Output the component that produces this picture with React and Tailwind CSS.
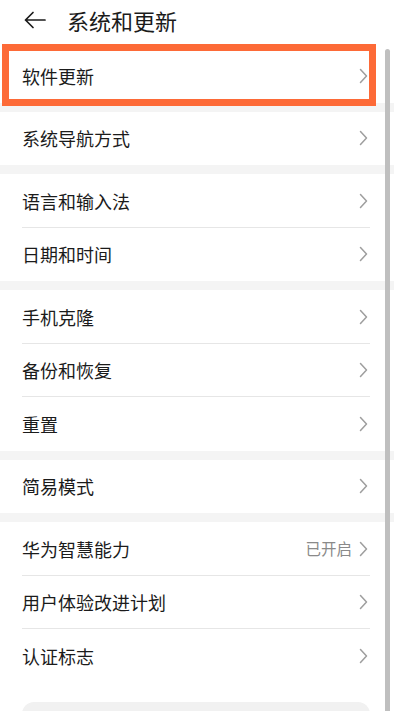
import React from "react";

function Chevron() {
  return (
    <svg width="9" height="16" viewBox="0 0 9 16" className="shrink-0">
      <path d="M1.5 1.5 L7.5 8 L1.5 14.5" fill="none" stroke="#9e9e9e" strokeWidth="1.5" strokeLinecap="round" strokeLinejoin="round" />
    </svg>
  );
}

function Row({ label, value, divider }) {
  return (
    <div className="relative h-[53.5px] bg-white flex items-center pl-[22px] pr-[26px]">
      <span className="flex-1 text-[18px] text-[#1b1b1b] leading-none">{label}</span>
      {value && <span className="text-[15.5px] text-[#8a8a8a] leading-none mr-[7px]">{value}</span>}
      <Chevron />
      {divider && <div className="absolute left-[22px] right-[24px] bottom-0 h-px bg-[#e6e6e6]" />}
    </div>
  );
}

function Band() {
  return <div className="h-[9px] bg-[#f4f4f4]" />;
}

export default function App() {
  return (
    <div
      className="relative w-[394px] h-[711px] overflow-hidden bg-white"
      style={{ fontFamily: '"Noto Sans CJK SC", "Noto Sans", sans-serif' }}
    >
      <div className="h-[49px] flex items-center">
        <div className="w-[67px] flex items-center pl-[24px] mb-[9px]">
          <svg width="22" height="18" viewBox="0 0 22 18">
            <path d="M21 9 H1.5 M9 1.5 L1.5 9 L9 16.5" fill="none" stroke="#1b1b1b" strokeWidth="1.7" strokeLinecap="round" strokeLinejoin="round" />
          </svg>
        </div>
        <span className="text-[22px] text-[#1b1b1b] leading-none mb-[10px]">系统和更新</span>
      </div>

      <Row label="软件更新" />
      <Band />
      <Row label="系统导航方式" />
      <Band />
      <Row label="语言和输入法" divider />
      <Row label="日期和时间" />
      <Band />
      <Row label="手机克隆" divider />
      <Row label="备份和恢复" divider />
      <Row label="重置" />
      <Band />
      <Row label="简易模式" />
      <Band />
      <Row label="华为智慧能力" value="已开启" divider />
      <Row label="用户体验改进计划" divider />
      <Row label="认证标志" />
      <div className="mt-[19px] mx-[22px] mr-[24px] h-[60px] rounded-[12px] bg-[#f1f1f1]" />

      <div className="absolute left-[2px] top-[44px] w-[374px] h-[62px] border-[7px] border-[#fd6a37]" />
      <div className="absolute right-[4px] top-[49px] bottom-0 w-[5px] rounded-t-full bg-[#bfbfbf]" />
    </div>
  );
}
